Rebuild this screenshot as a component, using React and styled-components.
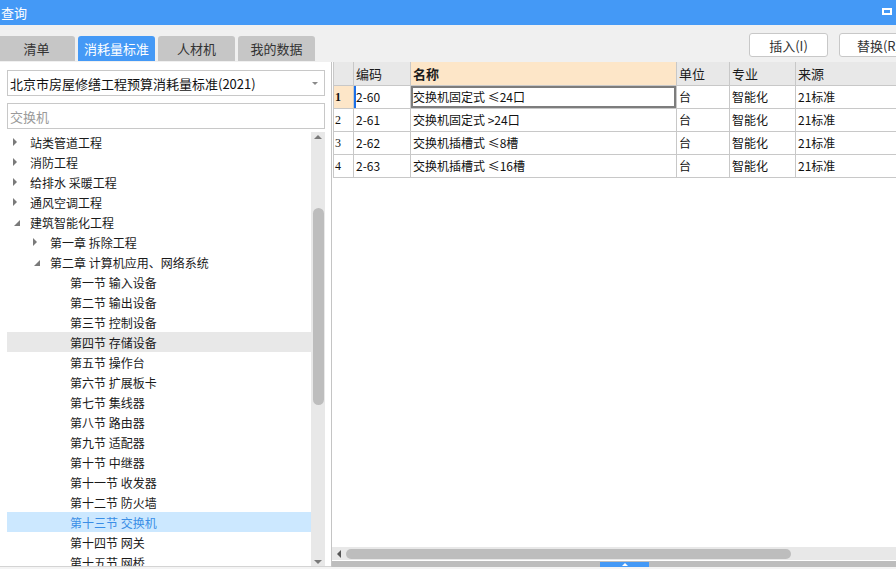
import React from "react";
import styled, { createGlobalStyle } from "styled-components";

const GlobalStyle = createGlobalStyle`
  html, body { margin: 0; padding: 0; background: #ffffff; }
  body { font-family: "Noto Sans CJK SC", "Noto Sans", sans-serif; }
  * { box-sizing: border-box; }
`;

const Root = styled.div`
  width: 896px;
  height: 569px;
  overflow: hidden;
  display: flex;
  flex-direction: column;
  background: #f0f0f0;
  color: #222;
`;

const TitleBar = styled.div`
  height: 25px;
  flex-shrink: 0;
  background: #4499f6;
  color: #fff;
  font-size: 13px;
  display: flex;
  align-items: center;
  justify-content: space-between;
  padding: 0 4px 1px 1px;
`;

const MaxIcon = styled.span`
  width: 10px;
  height: 7px;
  border: 2px solid #fff;
  border-top-width: 2px;
  margin-top: -1px;
`;

const TopStrip = styled.div`
  height: 37px;
  flex-shrink: 0;
  display: flex;
`;

const TabBar = styled.div`
  display: flex;
  gap: 3px;
  align-self: flex-end;
  margin: 0 0 1px -2px;
`;

const Tab = styled.div`
  width: 77px;
  height: 25px;
  border-radius: 3px 3px 0 0;
  background: ${(p) => (p.$active ? "#4499f6" : "#c6c6c6")};
  color: ${(p) => (p.$active ? "#fff" : "#333")};
  font-size: 13px;
  display: flex;
  align-items: center;
  justify-content: center;
`;

const ButtonGroup = styled.div`
  display: flex;
  gap: 11px;
  margin: 8px -22px 0 auto;
  align-self: flex-start;
`;

const Button = styled.div`
  width: 79px;
  height: 24px;
  border: 1px solid #c8c8c8;
  border-radius: 3px;
  background: #fff;
  color: #333;
  font-size: 13px;
  display: flex;
  align-items: center;
  justify-content: center;
`;

const Main = styled.div`
  height: 505px;
  flex-shrink: 0;
  display: flex;
  background: #fff;
`;

const LeftPanel = styled.div`
  width: 331px;
  flex-shrink: 0;
  padding: 8px 6px 0 7px;
  display: flex;
  flex-direction: column;
  border-bottom: 1px solid #d4d4d4;
`;

const Select = styled.div`
  height: 26px;
  flex-shrink: 0;
  border: 1px solid #c8c8c8;
  display: flex;
  align-items: center;
  justify-content: space-between;
  padding: 0 6px 0 2px;
  font-size: 13px;
  color: #111;
`;

const Caret = styled.span`
  width: 0;
  height: 0;
  border-left: 3px solid transparent;
  border-right: 3px solid transparent;
  border-top: 3px solid #8a8a8a;
`;

const SearchInput = styled.input`
  height: 26px;
  flex-shrink: 0;
  margin-top: 7px;
  border: 1px solid #c8c8c8;
  padding: 0 2px;
  font-family: "Noto Sans CJK SC", sans-serif;
  font-size: 13px;
  outline: none;
  &::placeholder { color: #9a9a9a; }
`;

const TreeWrap = styled.div`
  margin-top: 3px;
  flex: 1;
  min-height: 0;
  display: flex;
  overflow: hidden;
`;

const TreeList = styled.div`
  flex: 1;
  min-width: 0;
`;

const TreeRow = styled.div`
  height: 20px;
  display: flex;
  align-items: center;
  padding-left: ${(p) => 6 + p.$level * 20}px;
  font-size: 12px;
  white-space: nowrap;
  background: ${(p) => (p.$selected ? "#cce8ff" : p.$hover ? "#e8e8e8" : "transparent")};
  color: ${(p) => (p.$selected ? "#3a8ee6" : "#1a1a1a")};
`;

const ArrowBox = styled.span`
  width: 17px;
  flex-shrink: 0;
  display: flex;
  align-items: center;
`;

const Collapsed = styled.span`
  width: 0;
  height: 0;
  border-left: 4px solid #7a7a7a;
  border-top: 4px solid transparent;
  border-bottom: 4px solid transparent;
`;

const Expanded = styled.span`
  width: 0;
  height: 0;
  margin-left: 1px;
  margin-top: 2px;
  border-bottom: 6px solid #7a7a7a;
  border-left: 6px solid transparent;
`;

const VScroll = styled.div`
  width: 14px;
  flex-shrink: 0;
  background: #e8e8e8;
  display: flex;
  flex-direction: column;
  align-items: center;
`;

const ArrowUp = styled.span`
  margin-top: 3px;
  width: 0;
  height: 0;
  border-left: 4px solid transparent;
  border-right: 4px solid transparent;
  border-bottom: 4px solid #7a7a7a;
`;

const ArrowDown = styled.span`
  margin: auto 0 2px;
  width: 0;
  height: 0;
  border-left: 4px solid transparent;
  border-right: 4px solid transparent;
  border-top: 4px solid #7a7a7a;
`;

const VThumb = styled.div`
  margin-top: 69px;
  width: 11px;
  height: 197px;
  border-radius: 6px;
  background: #bdbdbd;
`;

const RightPanel = styled.div`
  flex: 1;
  min-width: 0;
  border-left: 1px solid #c4c4c4;
  display: flex;
  flex-direction: column;
`;

const GridArea = styled.div`
  flex: 1;
  min-height: 0;
  overflow: hidden;
  padding-left: 1px;
`;

const Table = styled.table`
  border-collapse: collapse;
  table-layout: fixed;
  width: 564px;
  font-size: 12px;
`;

const HeadCell = styled.th`
  height: 23px;
  padding: 0 0 0 2px;
  border: 1px solid #c8c8c8;
  border-top: none;
  background: ${(p) => (p.$accent ? "#fde6c8" : "#e8e8e8")};
  font-weight: ${(p) => (p.$accent ? 700 : 400)};
  font-size: 13px;
  text-align: left;
  color: #1a1a1a;
  white-space: nowrap;
  overflow: hidden;
`;

const Cell = styled.td`
  height: 23px;
  padding: 0 0 0 2px;
  border: 1px solid #c8c8c8;
  white-space: nowrap;
  overflow: hidden;
  color: #111;
  font-size: 12px;
  box-shadow: ${(p) =>
    p.$focus ? "inset 0 0 0 2px #7d7d7d" : p.$mark ? "inset 2px 0 0 #1a6fe8" : "none"};
`;

const NumCell = styled.td`
  height: 23px;
  padding: 2px 0 0 1px;
  border: 1px solid #c8c8c8;
  background: ${(p) => (p.$current ? "#fde6c8" : "#fff")};
  font-family: "Liberation Serif", "DejaVu Serif", serif;
  font-weight: ${(p) => (p.$current ? 700 : 400)};
  font-size: 12px;
  color: #111;
`;

const HScroll = styled.div`
  height: 13px;
  flex-shrink: 0;
  background: #e8e8e8;
  display: flex;
  align-items: center;
  padding-left: 5px;
`;

const ArrowLeft = styled.span`
  width: 0;
  height: 0;
  border-top: 4px solid transparent;
  border-bottom: 4px solid transparent;
  border-right: 4px solid #555;
`;

const HThumb = styled.div`
  margin-left: 5px;
  width: 445px;
  height: 10px;
  border-radius: 5px;
  background: #bdbdbd;
`;

const Splitter = styled.div`
  margin-top: 1px;
  height: 6px;
  flex-shrink: 0;
  background: #bdbdbd;
  display: flex;
  padding-left: 268px;
`;

const SplitTab = styled.div`
  width: 49px;
  height: 5px;
  margin-top: 1px;
  background: #4499f6;
  display: flex;
  align-items: center;
  justify-content: center;
`;

const TinyUp = styled.span`
  width: 0;
  height: 0;
  border-left: 3px solid transparent;
  border-right: 3px solid transparent;
  border-bottom: 3px solid #fff;
`;

const BottomEdge = styled.div`
  flex: 1;
  background: #f4f4f4;
`;

const tree = [
  { t: "站类管道工程", l: 0, a: "c" },
  { t: "消防工程", l: 0, a: "c" },
  { t: "给排水 采暖工程", l: 0, a: "c" },
  { t: "通风空调工程", l: 0, a: "c" },
  { t: "建筑智能化工程", l: 0, a: "e" },
  { t: "第一章 拆除工程", l: 1, a: "c" },
  { t: "第二章 计算机应用、网络系统", l: 1, a: "e" },
  { t: "第一节 输入设备", l: 2 },
  { t: "第二节 输出设备", l: 2 },
  { t: "第三节 控制设备", l: 2 },
  { t: "第四节 存储设备", l: 2, hover: true },
  { t: "第五节 操作台", l: 2 },
  { t: "第六节 扩展板卡", l: 2 },
  { t: "第七节 集线器", l: 2 },
  { t: "第八节 路由器", l: 2 },
  { t: "第九节 适配器", l: 2 },
  { t: "第十节 中继器", l: 2 },
  { t: "第十一节 收发器", l: 2 },
  { t: "第十二节 防火墙", l: 2 },
  { t: "第十三节 交换机", l: 2, sel: true },
  { t: "第十四节 网关", l: 2 },
  { t: "第十五节 网桥", l: 2 },
];

const rows = [
  ["2-60", "交换机固定式 ≤24口"],
  ["2-61", "交换机固定式 >24口"],
  ["2-62", "交换机插槽式 ≤8槽"],
  ["2-63", "交换机插槽式 ≤16槽"],
];

const cols = [20, 57, 266, 53, 66, 102];

export default function App() {
  return (
    <Root>
      <GlobalStyle />
      <TitleBar>
        <span>查询</span>
        <MaxIcon />
      </TitleBar>
      <TopStrip>
        <TabBar>
          <Tab>清单</Tab>
          <Tab $active>消耗量标准</Tab>
          <Tab>人材机</Tab>
          <Tab>我的数据</Tab>
        </TabBar>
        <ButtonGroup>
          <Button>插入(I)</Button>
          <Button>替换(R)</Button>
        </ButtonGroup>
      </TopStrip>
      <Main>
        <LeftPanel>
          <Select>
            <span>北京市房屋修缮工程预算消耗量标准(2021)</span>
            <Caret />
          </Select>
          <SearchInput placeholder="交换机" />
          <TreeWrap>
            <TreeList>
              {tree.map((n, i) => (
                <TreeRow key={i} $level={n.l} $hover={n.hover} $selected={n.sel}>
                  <ArrowBox>
                    {n.a === "c" && <Collapsed />}
                    {n.a === "e" && <Expanded />}
                  </ArrowBox>
                  {n.t}
                </TreeRow>
              ))}
            </TreeList>
            <VScroll>
              <ArrowUp />
              <VThumb />
              <ArrowDown />
            </VScroll>
          </TreeWrap>
        </LeftPanel>
        <RightPanel>
          <GridArea>
            <Table>
              <colgroup>
                {cols.map((w, i) => (
                  <col key={i} style={{ width: w }} />
                ))}
              </colgroup>
              <thead>
                <tr>
                  <HeadCell />
                  <HeadCell>编码</HeadCell>
                  <HeadCell $accent>名称</HeadCell>
                  <HeadCell>单位</HeadCell>
                  <HeadCell>专业</HeadCell>
                  <HeadCell>来源</HeadCell>
                </tr>
              </thead>
              <tbody>
                {rows.map((r, i) => (
                  <tr key={i}>
                    <NumCell $current={i === 0}>{i + 1}</NumCell>
                    <Cell $mark={i === 0}>{r[0]}</Cell>
                    <Cell $focus={i === 0}>{r[1]}</Cell>
                    <Cell>台</Cell>
                    <Cell>智能化</Cell>
                    <Cell>21标准</Cell>
                  </tr>
                ))}
              </tbody>
            </Table>
          </GridArea>
          <HScroll>
            <ArrowLeft />
            <HThumb />
          </HScroll>
          <Splitter>
            <SplitTab>
              <TinyUp />
            </SplitTab>
          </Splitter>
        </RightPanel>
      </Main>
      <BottomEdge />
    </Root>
  );
}
